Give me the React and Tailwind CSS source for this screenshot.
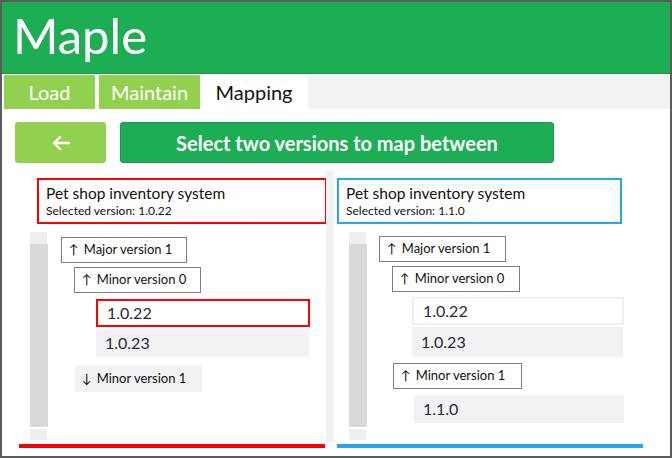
import React from 'react';

const font = { fontFamily: 'Lato, "Open Sans", sans-serif' };

function Scrollbar() {
    return (
        <div className="flex flex-col w-[18px] shrink-0">
            <div className="h-[12px] w-[17px] bg-[#efefef]" />
            <div className="h-[184px] bg-[#d9d9d9]" />
            <div className="h-[2px]" />
            <div className="h-[11px] w-[17px] bg-[#efefef]" />
        </div>
    );
}

function GroupBox({ arrow, label, outlined, className }) {
    return (
        <div
            className={`flex items-center h-[26px] px-[7px] text-[13px] whitespace-nowrap text-[#111] ${
                outlined ? 'border border-[#7f7f7f] bg-white' : 'bg-[#f2f2f2]'
            } ${className}`}
        >
            <span className="mr-[5px]">{arrow}</span>
            {label}
        </div>
    );
}

function VersionRow({ label, variant, className }) {
    const styles = {
        red: 'border-2 border-[#ff0000] bg-white',
        white: 'border-2 border-[#f0f0f0] bg-white',
        gray: 'bg-[#f2f2f2]',
    };
    return (
        <div className={`flex items-center h-[28px] px-[9px] text-[16px] text-[#262b3a] ${styles[variant]} ${className}`}>
            {label}
        </div>
    );
}

function PanelHeader({ version, color, width }) {
    return (
        <div className={`flex flex-col justify-center h-[47px] px-[7px] border-2 ${color} ${width}`}>
            <div className="text-[15.5px] leading-[19px] text-[#111]">Pet shop inventory system</div>
            <div className="text-[12px] leading-[16px] text-[#111]">Selected version: {version}</div>
        </div>
    );
}

export default function App() {
    return (
        <div style={font} className="w-[672px] h-[458px] border-2 border-[#5c5c5c] bg-white overflow-hidden">
            {/* Header */}
            <div className="h-[72px] bg-[#1dae55] border-b border-[#179849] flex items-center px-[11px]">
                <span className="text-white text-[49px] leading-none pb-[4px]">Maple</span>
            </div>

            {/* Tabs */}
            <div className="flex h-[34px] bg-[#f2f2f2] mt-[1px]">
                <div className="w-[2px] bg-white" />
                <div className="w-[91px] bg-[#92d050] text-white text-[20px] flex items-center justify-center">Load</div>
                <div className="w-[4px] bg-white" />
                <div className="w-[101px] bg-[#92d050] text-white text-[20px] flex items-center justify-center">Maintain</div>
                <div className="w-[108px] bg-white text-[#111] text-[20px] flex items-center justify-center">Mapping</div>
            </div>

            {/* Action buttons */}
            <div className="flex gap-[14px] pl-[13px] pt-[13px]">
                <button className="w-[91px] h-[41px] rounded-[3px] bg-[#92d050] flex items-center justify-center">
                    <svg width="20" height="16" viewBox="0 0 20 16" fill="none" stroke="white" strokeWidth="2.4" strokeLinecap="round" strokeLinejoin="round">
                        <path d="M18 8H3M9 2L3 8l6 6" />
                    </svg>
                </button>
                <button className="w-[434px] h-[41px] rounded-[3px] bg-[#1dae55] border border-[#189a4b] text-white font-bold text-[20px]">
                    Select two versions to map between
                </button>
            </div>

            {/* Panels */}
            <div className="flex mt-[7px] h-[278px]">
                {/* Left panel */}
                <div className="w-[308px] ml-[16px] flex flex-col">
                    <PanelHeader version="1.0.22" color="border-[#ff0000]" width="ml-[19px] w-[290px] mt-[8px]" />
                    <div className="flex mt-[8px] ml-[12px] h-[208px]">
                        <Scrollbar />
                        <div className="flex flex-col pl-[13px] pt-[5px]">
                            <GroupBox arrow="↑" label="Major version 1" outlined className="w-[126px]" />
                            <GroupBox arrow="↑" label="Minor version 0" outlined className="w-[127px] ml-[13px] mt-[4px]" />
                            <VersionRow label="1.0.22" variant="red" className="w-[214px] ml-[35px] mt-[6px]" />
                            <VersionRow label="1.0.23" variant="gray" className="w-[213px] ml-[35px] mt-[2px]" />
                            <GroupBox arrow="↓" label="Minor version 1" className="w-[127px] h-[24px] ml-[14px] mt-[9px]" />
                        </div>
                    </div>
                    <div className="h-[4px] w-[306px] ml-[1px] mt-[4px] bg-[#ff0000]" />
                </div>

                {/* Divider */}
                <div className="w-[8px] h-[272px] bg-[#f2f2f2]" />

                {/* Right panel */}
                <div className="w-[308px] ml-[3px] flex flex-col">
                    <PanelHeader version="1.1.0" color="border-[#1eaaf1]" width="w-[285px] mt-[8px]" />
                    <div className="flex mt-[8px] ml-[12px] h-[208px]">
                        <Scrollbar />
                        <div className="flex flex-col pl-[12px] pt-[4px]">
                            <GroupBox arrow="↑" label="Major version 1" outlined className="w-[127px]" />
                            <GroupBox arrow="↑" label="Minor version 0" outlined className="w-[128px] ml-[13px] mt-[4px]" />
                            <VersionRow label="1.0.22" variant="white" className="w-[212px] ml-[33px] mt-[5px]" />
                            <VersionRow label="1.0.23" variant="gray" className="w-[211px] ml-[33px] mt-[2px] h-[30px]" />
                            <GroupBox arrow="↑" label="Minor version 1" outlined className="w-[129px] ml-[14px] mt-[6px]" />
                            <VersionRow label="1.1.0" variant="gray" className="w-[210px] ml-[35px] mt-[6px]" />
                        </div>
                    </div>
                    <div className="h-[4px] w-[306px] mt-[4px] bg-[#1eaaf1]" />
                </div>
            </div>
        </div>
    );
}
